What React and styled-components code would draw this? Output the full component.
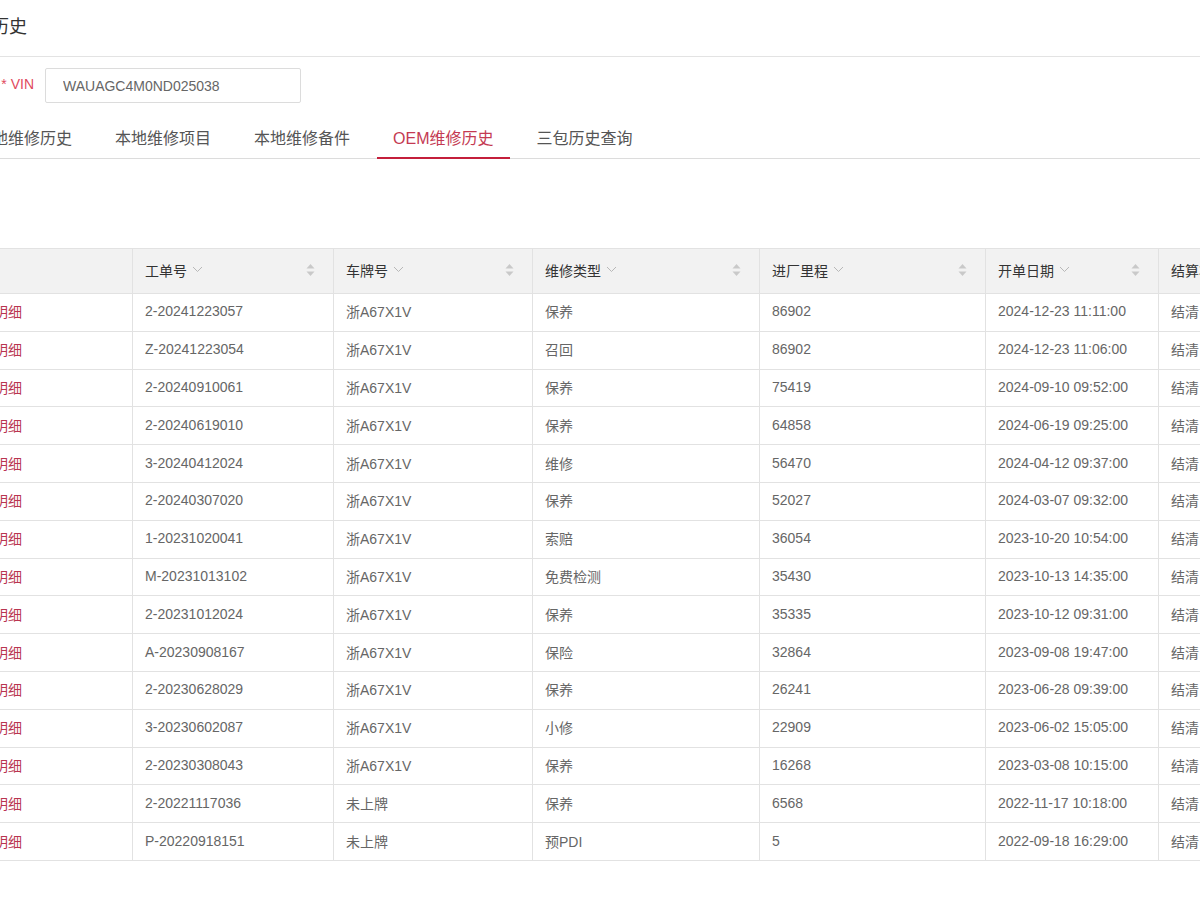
import React from 'react';
import styled, { createGlobalStyle } from 'styled-components';

const GlobalStyle = createGlobalStyle`
  html, body {
    margin: 0;
    padding: 0;
    background: #fff;
    overflow: hidden;
  }
  body {
    font-family: "Liberation Sans", "Noto Sans CJK SC", sans-serif;
    color: #666;
  }
`;

const columns = [
  { key: 'no', title: '工单号', width: 201 },
  { key: 'plate', title: '车牌号', width: 199 },
  { key: 'type', title: '维修类型', width: 227 },
  { key: 'mileage', title: '进厂里程', width: 226 },
  { key: 'date', title: '开单日期', width: 173 },
  { key: 'status', title: '结算状态', width: 160 },
];

const rows = [
  ['2-20241223057', '浙A67X1V', '保养', '86902', '2024-12-23 11:11:00'],
  ['Z-20241223054', '浙A67X1V', '召回', '86902', '2024-12-23 11:06:00'],
  ['2-20240910061', '浙A67X1V', '保养', '75419', '2024-09-10 09:52:00'],
  ['2-20240619010', '浙A67X1V', '保养', '64858', '2024-06-19 09:25:00'],
  ['3-20240412024', '浙A67X1V', '维修', '56470', '2024-04-12 09:37:00'],
  ['2-20240307020', '浙A67X1V', '保养', '52027', '2024-03-07 09:32:00'],
  ['1-20231020041', '浙A67X1V', '索赔', '36054', '2023-10-20 10:54:00'],
  ['M-20231013102', '浙A67X1V', '免费检测', '35430', '2023-10-13 14:35:00'],
  ['2-20231012024', '浙A67X1V', '保养', '35335', '2023-10-12 09:31:00'],
  ['A-20230908167', '浙A67X1V', '保险', '32864', '2023-09-08 19:47:00'],
  ['2-20230628029', '浙A67X1V', '保养', '26241', '2023-06-28 09:39:00'],
  ['3-20230602087', '浙A67X1V', '小修', '22909', '2023-06-02 15:05:00'],
  ['2-20230308043', '浙A67X1V', '保养', '16268', '2023-03-08 10:15:00'],
  ['2-20221117036', '未上牌', '保养', '6568', '2022-11-17 10:18:00'],
  ['P-20220918151', '未上牌', '预PDI', '5', '2022-09-18 16:29:00'],
];

const tabs = ['本地维修历史', '本地维修项目', '本地维修备件', 'OEM维修历史', '三包历史查询'];

function Chevron() {
  return (
    <svg width="11" height="7" viewBox="0 0 11 7" fill="none">
      <path d="M1 1l4.5 4.5L10 1" stroke="#b8b8b8" strokeWidth="1" />
    </svg>
  );
}

function SortIcon() {
  return (
    <svg width="9" height="14" viewBox="0 0 9 14">
      <path d="M4.5 1L8.5 5.5H0.5z" fill="#c9c9c9" />
      <path d="M4.5 13L0.5 8.5h8z" fill="#c9c9c9" />
    </svg>
  );
}

export default function App() {
  return (
    <Viewport>
      <GlobalStyle />
      <Page>
        <TitleBar>维修历史</TitleBar>

        <FormRow>
          <Label>
            <Required>*</Required> VIN
          </Label>
          <Input value="WAUAGC4M0ND025038" readOnly />
        </FormRow>

        <TabBar>
          {tabs.map(t => (
            <Tab key={t} active={t === 'OEM维修历史'}>
              {t}
            </Tab>
          ))}
        </TabBar>

        <Table>
          <colgroup>
            <col style={{ width: 177 }} />
            {columns.map(c => (
              <col key={c.key} style={{ width: c.width }} />
            ))}
          </colgroup>
          <thead>
            <tr>
              <Th />
              {columns.map(c => (
                <Th key={c.key}>
                  <HeadInner>
                    <HeadTitle>
                      {c.title}
                      <Chevron />
                    </HeadTitle>
                    <SortIcon />
                  </HeadInner>
                </Th>
              ))}
            </tr>
          </thead>
          <tbody>
            {rows.map(r => (
              <tr key={r[0]}>
                <Td>
                  <LinkText>查看明细</LinkText>
                </Td>
                {r.map((v, i) => (
                  <Td key={i}>{v}</Td>
                ))}
                <Td>结清</Td>
              </tr>
            ))}
          </tbody>
        </Table>
      </Page>
    </Viewport>
  );
}

const Viewport = styled.div`
  width: 1200px;
  height: 900px;
  overflow: hidden;
`;

const Page = styled.div`
  margin-left: -45px;
  width: 1400px;
`;

const TitleBar = styled.div`
  height: 57px;
  box-sizing: border-box;
  padding-bottom: 6px;
  display: flex;
  align-items: center;
  font-size: 18px;
  color: #333;
  border-bottom: 1px solid #e3e3e3;
`;

const FormRow = styled.div`
  display: flex;
  align-items: center;
  margin-top: 11px;
`;

const Label = styled.div`
  width: 79px;
  padding-right: 11px;
  text-align: right;
  font-size: 14px;
  color: #df4a5e;
  margin-top: -3px;
`;

const Required = styled.span`
  color: #df4a5e;
`;

const Input = styled.input`
  width: 256px;
  height: 35px;
  box-sizing: border-box;
  border: 1px solid #dcdcdc;
  border-radius: 2px;
  padding: 0 17px;
  font-family: inherit;
  font-size: 14px;
  color: #666;
  outline: none;
`;

const TabBar = styled.div`
  display: flex;
  gap: 11px;
  margin-top: 16px;
  padding-left: 5px;
  border-bottom: 1px solid #dcdcdc;
`;

const Tab = styled.div`
  height: 40px;
  box-sizing: border-box;
  padding: 0 16px 3px;
  display: flex;
  align-items: center;
  font-size: 16px;
  color: ${p => (p.active ? '#c43a52' : '#555')};
  border-bottom: 2px solid ${p => (p.active ? '#c41f3b' : 'transparent')};
  margin-bottom: -1px;
`;

const Table = styled.table`
  margin-top: 89px;
  border-collapse: collapse;
  table-layout: fixed;
  width: 1363px;
  font-size: 14px;
`;

const Th = styled.th`
  height: 41px;
  padding: 0 12px 3px;
  background: #f2f2f2;
  border: 1px solid #e2e2e2;
  font-weight: normal;
  color: #333;
  text-align: left;
`;

const HeadInner = styled.div`
  display: flex;
  align-items: center;
  justify-content: space-between;
  padding-right: 6px;
  white-space: nowrap;
`;

const HeadTitle = styled.span`
  display: inline-flex;
  align-items: center;
  gap: 5px;
`;

const Td = styled.td`
  height: 34.8px;
  padding: 0 12px 2px;
  border: 1px solid #e2e2e2;
  color: #666;
  white-space: nowrap;
  overflow: hidden;
`;

const LinkText = styled.span`
  color: #b93550;
  margin-left: -2px;
`;
